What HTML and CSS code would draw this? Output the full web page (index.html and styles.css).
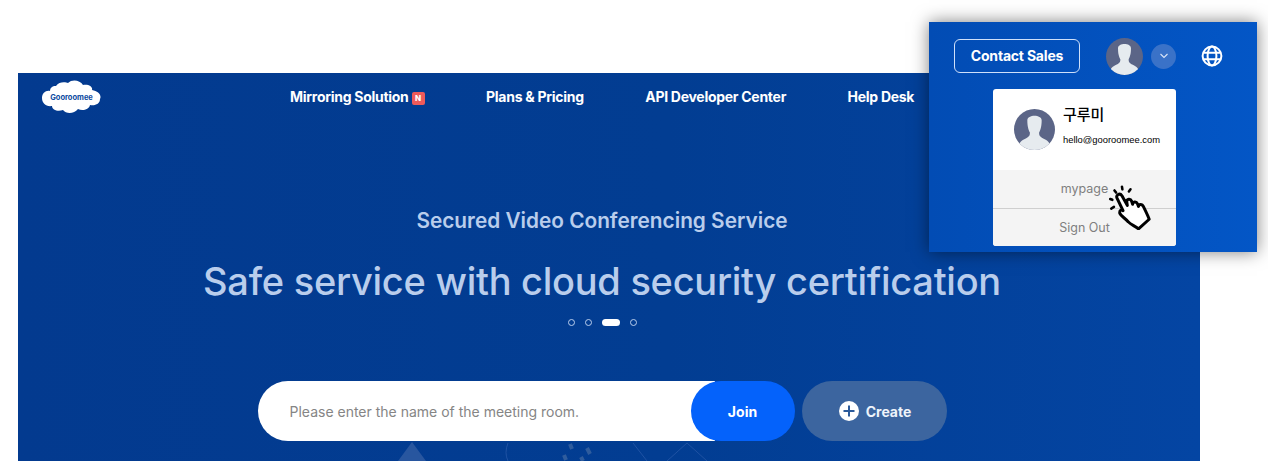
FILE: index.html
```html
<!DOCTYPE html>
<html lang="en">
<head>
  <meta charset="UTF-8">
  <meta name="viewport" content="width=device-width, initial-scale=1.0">
  <title>Gooroomee</title>
  <link rel="stylesheet" href="styles.css">
</head>
<body>
  <section class="hero">
    <svg class="hero_art" viewBox="0 0 1182 388" aria-hidden="true">
      <path d="M380 388 L394 369 L408 388 Z" fill="#28569f"/>
      <path d="M490 370 Q486 380 490 388" fill="none" stroke="#1f52a3"/>
      <path d="M552 371 l2 5 M569 375 l3 6 M546 382 l2 5 M563 384 l2 4" stroke="#2f5c9d" stroke-width="4" fill="none"/>
      <path d="M615 370 L629 388 M649 388 L669 370 L689 388" stroke="#1f52a3" fill="none"/>
    </svg>
    <header class="top">
      <svg class="logo" viewBox="0 0 59 35">
        <path d="M14 7 C17 2 24 3 26 4 C30 0 38 1 41 6 C47 5 51 8 50 11 C56 12 60 16 58 20 C58 25 53 27 48 26 C47 31 40 32 36 30 C32 35 24 35 21 31 C16 33 10 31 10 27 C4 28 0 24 0 19 C0 14 4 11 8 12 C8 9 10 7 14 7 Z" fill="#fff"/>
        <text x="29.5" y="20.5" text-anchor="middle" class="logo_text">Gooroomee</text>
      </svg>
      <nav class="menu">
        <a>Mirroring Solution <span class="new">N</span></a>
        <a>Plans &amp; Pricing</a>
        <a>API Developer Center</a>
        <a>Help Desk</a>
      </nav>
    </header>
    <div class="copy">
      <h2>Secured Video Conferencing Service</h2>
      <h1>Safe service with cloud security certification</h1>
      <div class="dots">
        <span class="dot"></span>
        <span class="dot"></span>
        <span class="dot on"></span>
        <span class="dot"></span>
      </div>
      <div class="actions">
        <div class="room">
          <span class="room_text">Please enter the name of the meeting room.</span>
          <button class="join">Join</button>
        </div>
        <button class="create">
          <svg class="plus" viewBox="0 0 20 20">
            <circle cx="10" cy="10" r="10" fill="#fff"/>
            <path d="M10 4.5v11M4.5 10h11" stroke="#2b5a9b" stroke-width="2"/>
          </svg>
          Create
        </button>
      </div>
    </div>
  </section>

  <aside class="inset">
    <div class="inset_top">
      <a class="sales">Contact Sales</a>
      <svg class="avatar big" viewBox="0 0 40 40">
        <use href="#person"/>
      </svg>
      <span class="caret">
        <svg viewBox="0 0 10 6"><path d="M1.5 1l3.5 3.5L8.5 1" fill="none" stroke="#dce6f7" stroke-width="1.1"/></svg>
      </span>
      <svg class="globe" viewBox="0 0 22 22" fill="none" stroke="#fff" stroke-width="2">
        <circle cx="11" cy="11" r="9.4"/>
        <ellipse cx="11" cy="11" rx="4.4" ry="9.4"/>
        <path d="M2.4 7.8h17.2M2.4 14.2h17.2"/>
      </svg>
    </div>
    <div class="card">
      <div class="card_user">
        <svg class="avatar mid" viewBox="0 0 40 40">
          <defs>
            <g id="person">
              <circle cx="20" cy="20" r="20" fill="#5b6587"/>
              <clipPath id="round"><circle cx="20" cy="20" r="20"/></clipPath>
              <path clip-path="url(#round)" d="M13 11 C13 5 27 5 27 11 C27 17 26 20 24.5 23 C24.5 26 25 27 29 29 C33 31 36 33 36 40 L4 40 C4 33 7 31 11 29 C15 27 15.5 26 15.5 23 C14 20 13 17 13 11 Z" fill="#e6ebef"/>
            </g>
          </defs>
          <use href="#person"/>
        </svg>
        <div class="who">
          <div class="who_name">구루미</div>
          <div class="who_mail">hello@gooroomee.com</div>
        </div>
      </div>
      <a class="card_row first">mypage</a>
      <a class="card_row">Sign Out</a>
    </div>
    <svg class="hand" viewBox="0 0 44 42">
      <g fill="none" stroke="#000" stroke-width="2.4" stroke-linecap="round">
        <path d="M3 13l2 .8M7 5l1.500 2M14 1.500l.4 2.500M22 4l-1.500 2M4 22l2.500-1.500"/>
      </g>
      <path d="M15 24 L9.500 12.500 C8 9 12 7 14 10 L19 19 L18.500 15.500 C18.500 13 22 12.500 23 15 L24 18 C24 15.500 27.500 15 28.500 17.500 L29.500 20 C29.500 17.500 33 17.500 34 20 C36 24 38 28 39.500 32 L29.500 41 C27 38.500 22 37 20 34.500 C17 31 13 29 12 26.500 C11.500 23 13.500 23 15 24 Z" fill="#fff" stroke="#000" stroke-width="2.800" stroke-linejoin="round"/>
    </svg>
  </aside>
</body>
</html>
```

FILE: styles.css
```css
* {
  box-sizing: border-box;
}
body {
  margin: 0;
  background: #fff;
  font-family: Inter, "Noto Sans CJK KR", sans-serif;
}
button {
  font-family: inherit;
  border: 0;
}

/* main banner */
.hero {
  position: relative;
  width: 1182px;
  height: 388px;
  margin: 73px 0 0 18px;
  padding-right: 14px;
  overflow: hidden;
  background: linear-gradient(90deg, #033a8f 0%, #023d92 55%, #0445a3 100%);
}
.hero_art {
  position: absolute;
  left: 0;
  top: 0;
  width: 1182px;
  height: 388px;
}
.top {
  position: relative;
  display: flex;
  height: 48px;
  padding: 6px 0 0 24px;
}
.logo {
  width: 59px;
  height: 35px;
}
.logo_text {
  font: 700 7.5px Inter, sans-serif;
  fill: #0b4aa0;
}
.menu {
  display: flex;
  gap: 61.5px;
  margin-left: 189px;
  padding-top: 9px;
  color: #fff;
  font-size: 14px;
  font-weight: 700;
  letter-spacing: -0.28px;
  line-height: 17px;
}
.new {
  display: inline-block;
  width: 13px;
  height: 13px;
  border-radius: 2px;
  background: #ee5a5a;
  font-size: 8px;
  font-weight: 800;
  letter-spacing: 0;
  line-height: 13px;
  text-align: center;
  vertical-align: 1px;
}
.copy {
  position: relative;
  display: flex;
  flex-direction: column;
  align-items: center;
}
.copy h2 {
  margin: 88px 0 0;
  color: #b9cdec;
  font-size: 20.8px;
  font-weight: 600;
  line-height: 24px;
}
.copy h1 {
  margin: 25px 0 0;
  color: #b9cdec;
  font-size: 38px;
  font-weight: 500;
  letter-spacing: -0.27px;
  line-height: 46px;
}
.dots {
  display: flex;
  align-items: center;
  gap: 10px;
  margin-top: 15px;
}
.dot {
  width: 7px;
  height: 7px;
  border: 1px solid #b9cdec;
  border-radius: 50%;
}
.dot.on {
  width: 18px;
  height: 7px;
  border: 0;
  border-radius: 4px;
  background: #fff;
}
.actions {
  display: flex;
  gap: 7px;
  margin-top: 55px;
}
.room {
  display: flex;
  align-items: center;
  justify-content: space-between;
  width: 537px;
  height: 60px;
  border-radius: 30px 0 0 30px;
  background: linear-gradient(90deg, #fff 457px, transparent 457px);
}
.room_text {
  padding-left: 32px;
  color: #858585;
  font-size: 14px;
}
.join {
  width: 104px;
  height: 60px;
  border-radius: 30px;
  background: #0462fb;
  color: #fff;
  font-size: 14px;
  font-weight: 700;
}
.create {
  display: flex;
  align-items: center;
  justify-content: center;
  gap: 7px;
  width: 145px;
  height: 60px;
  padding-left: 8px;
  border-radius: 30px;
  background: #3c659f;
  color: #eef3fa;
  font-size: 14px;
  font-weight: 700;
}
.plus {
  width: 20px;
  height: 20px;
}

/* cropped account menu laid over the banner */
.inset {
  position: absolute;
  left: 929px;
  top: 22px;
  width: 328px;
  height: 230px;
  background: linear-gradient(90deg, #024cb4, #0356c6);
  box-shadow: 0 0 16px rgba(0, 0, 0, 0.5);
}
.inset_top {
  display: flex;
  align-items: center;
  height: 67px;
  padding: 1px 0 0 25px;
}
.sales {
  width: 126px;
  height: 34px;
  border: 1px solid #cfe0fa;
  border-radius: 6px;
  color: #fff;
  font-size: 14px;
  font-weight: 700;
  letter-spacing: -0.2px;
  line-height: 32px;
  text-align: center;
}
.avatar {
  flex: none;
  display: block;
}
.avatar.big {
  width: 37px;
  height: 37px;
  margin-left: 26px;
}
.avatar.mid {
  width: 41px;
  height: 41px;
}
.caret {
  display: flex;
  align-items: center;
  justify-content: center;
  width: 25px;
  height: 25px;
  margin-left: 8px;
  border-radius: 50%;
  background: #3a72c8;
}
.caret svg {
  width: 10px;
  height: 6px;
}
.globe {
  width: 22px;
  height: 22px;
  margin-left: 25px;
}
.card {
  width: 183px;
  height: 157px;
  margin-left: 64px;
  overflow: hidden;
  border-radius: 3px;
  background: #fff;
}
.card_user {
  display: flex;
  gap: 8px;
  height: 81px;
  padding: 20px 0 0 21px;
}
.who_name {
  margin-top: -2px;
  color: #000;
  font-size: 15px;
  font-weight: 500;
  line-height: 16px;
}
.who_mail {
  margin-top: 10px;
  color: #000;
  font-family: "Liberation Sans", sans-serif;
  font-size: 9.4px;
  line-height: 14px;
  white-space: nowrap;
}
.card_row {
  display: block;
  height: 38px;
  background: #f4f4f4;
  color: #7f7f7f;
  font-size: 12.5px;
  line-height: 38px;
  text-align: center;
}
.card_row.first {
  height: 39px;
  border-bottom: 1px solid #cfcfcf;
  line-height: 37px;
}
.hand {
  position: absolute;
  left: 178px;
  top: 163px;
  width: 47px;
  height: 45px;
}
```
